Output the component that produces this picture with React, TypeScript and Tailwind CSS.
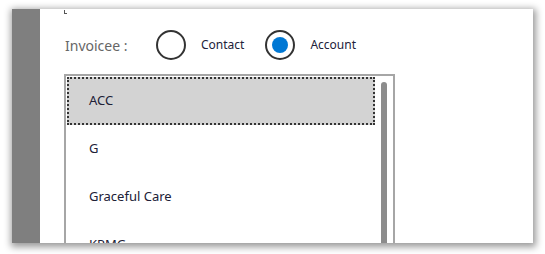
import React from 'react';

const items = ['ACC', 'G', 'Graceful Care', 'KPMG', 'Microsoft'];

const Radio: React.FC<{ label: string; checked?: boolean }> = ({ label, checked }) => (
  <label className="flex items-center">
    <span className="flex h-[30px] w-[30px] items-center justify-center rounded-full border-2 border-[#333333]">
      {checked && <span className="h-[16px] w-[16px] rounded-full bg-[#0078d4]" />}
    </span>
    <span className="ml-[15px] text-[12px] text-[#22223a]">{label}</span>
  </label>
);

export default function App() {
  return (
    <div className="h-[254px] w-[545px] bg-white pl-[12px] pt-[9px] font-['Noto_Sans','Open_Sans',sans-serif]">
      <div className="flex h-[234px] w-[521px] overflow-hidden bg-white shadow-[1px_2px_7px_2px_rgba(0,0,0,0.4)]">
        <div className="w-[28px] shrink-0 bg-[#7f7f7f]" />
        <div className="flex-1 pl-[24px]">
          <div className="mt-[1px] h-[4px] w-[3px] border-b border-l border-[#555]" />
          <div className="mt-[16px] flex items-center">
            <span className="ml-px w-[89px] text-[14px] text-[#666666]">Invoicee :</span>
            <div className="ml-[2px] flex items-center gap-[21px]">
              <Radio label="Contact" />
              <Radio label="Account" checked />
            </div>
          </div>
          <div className="mt-[14px] flex w-[331px] border-2 border-b-0 border-[#a6a6a6] pl-px pt-px">
            <ul className="w-[308px]">
              {items.map((it, i) => (
                <li
                  key={it}
                  className={`flex items-center text-[13px] text-[#202036] ${
                    i === 0
                      ? 'h-[48px] border-2 border-dotted border-[#333] bg-[#d3d3d3] pl-[20px]'
                      : 'h-[48px] pl-[22px]'
                  }`}
                >
                  {it}
                </li>
              ))}
            </ul>
            <div className="flex flex-1 justify-center pt-[5px]">
              <div className="h-[200px] w-[6px] rounded-t-full bg-[#8c8c8c]" />
            </div>
          </div>
        </div>
      </div>
    </div>
  );
}
